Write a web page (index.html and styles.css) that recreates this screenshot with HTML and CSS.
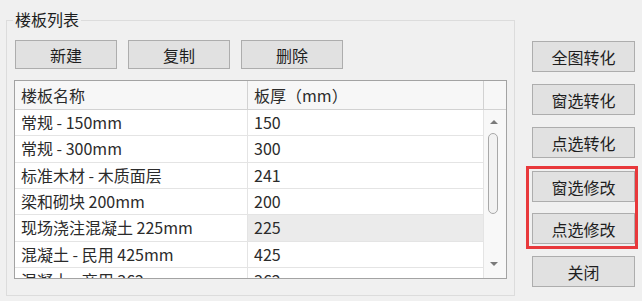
FILE: index.html
```html
<!DOCTYPE html>
<html lang="zh-CN">
<head>
    <meta charset="UTF-8">
    <title>楼板列表</title>
    <link rel="stylesheet" href="styles.css">
</head>
<body>
<div class="window">
    <div class="group">
        <span class="group-title">楼板列表</span>
        <div class="toolbar">
            <button class="btn">新建</button>
            <button class="btn">复制</button>
            <button class="btn">删除</button>
        </div>
        <div class="grid">
            <div class="grid-head">
                <div class="cell">楼板名称</div>
                <div class="cell">板厚（mm）</div>
                <div class="cell"></div>
            </div>
            <div class="grid-body">
                <div class="rows">
                    <div class="row"><div class="cell">常规 - 150mm</div><div class="cell">150</div></div>
                    <div class="row"><div class="cell">常规 - 300mm</div><div class="cell">300</div></div>
                    <div class="row"><div class="cell">标准木材 - 木质面层</div><div class="cell">241</div></div>
                    <div class="row"><div class="cell">梁和砌块 200mm</div><div class="cell">200</div></div>
                    <div class="row"><div class="cell">现场浇注混凝土 225mm</div><div class="cell current">225</div></div>
                    <div class="row"><div class="cell">混凝土 - 民用 425mm</div><div class="cell">425</div></div>
                    <div class="row"><div class="cell">混凝土 - 商用 362mm</div><div class="cell">362</div></div>
                </div>
                <div class="vscroll">
                    <span class="arrow up"></span>
                    <span class="thumb"></span>
                    <span class="arrow down"></span>
                </div>
            </div>
        </div>
    </div>

    <div class="side">
        <button class="btn side-btn">全图转化</button>
        <button class="btn side-btn">窗选转化</button>
        <button class="btn side-btn">点选转化</button>
        <div class="mark">
            <button class="btn side-btn">窗选修改</button>
            <button class="btn side-btn">点选修改</button>
        </div>
        <button class="btn side-btn">关闭</button>
    </div>
</div>
</body>
</html>
```

FILE: styles.css
```css
* {
    box-sizing: border-box;
}

body {
    margin: 0;
    background: #f0f0f0;
    font-family: "Noto Sans CJK SC", "Noto Sans", sans-serif;
    font-size: 16px;
    color: #2b2b2b;
}

.window {
    display: flex;
    align-items: flex-start;
    padding-left: 6px;
    height: 301px;
}

/* group box */
.group {
    position: relative;
    margin-top: 20px;
    width: 509px;
    height: 276px;
    border: 1px solid #dcdcdc;
    padding: 19px 7px 0 7px;
}

.group-title {
    position: absolute;
    top: -12px;
    left: 6px;
    padding: 0 2px;
    line-height: 20px;
    background: #f0f0f0;
    color: #1e1e1e;
}

.toolbar {
    display: flex;
    gap: 11px;
    padding-left: 1px;
}

.btn {
    font-family: inherit;
    font-size: 16px;
    color: #1e1e1e;
    background: #e1e1e1;
    border: 1px solid #adadad;
    border-radius: 0;
    padding: 0;
    width: 102px;
    height: 29px;
    line-height: 20px;
}

/* list */
.grid {
    margin-top: 11px;
    width: 493px;
    height: 199px;
    border: 1px solid #a3a3a3;
    background: #fff;
    display: flex;
    flex-direction: column;
}

.grid-head {
    display: grid;
    grid-template-columns: 233px 236px 1fr;
    height: 29px;
    background: #f7f7f7;
    border-bottom: 1px solid #d2d2d2;
}

.grid-head .cell {
    border-right: 1px solid #d2d2d2;
    line-height: 28px;
}

.grid-head .cell:last-child {
    border-right: none;
}

.cell {
    padding-left: 6px;
    white-space: nowrap;
    overflow: hidden;
}

.grid-body {
    flex: 1;
    display: flex;
    min-height: 0;
}

.rows {
    width: 469px;
    overflow: hidden;
}

.row {
    display: grid;
    grid-template-columns: 233px 236px;
    height: 26.35px;
    border-bottom: 1px solid #e4e4e4;
}

.row .cell {
    border-right: 1px solid #e4e4e4;
    line-height: 25px;
}

.row .cell.current {
    background: #ebebeb;
}

/* scrollbar */
.vscroll {
    position: relative;
    flex: 1;
    background: #f8f8f8;
}

.arrow {
    position: absolute;
    left: 6px;
    width: 0;
    height: 0;
    border-left: 4px solid transparent;
    border-right: 4px solid transparent;
}

.arrow.up {
    top: 10px;
    border-bottom: 4px solid #7a7a7a;
}

.arrow.down {
    bottom: 12px;
    border-top: 4px solid #7a7a7a;
}

.thumb {
    position: absolute;
    top: 23px;
    left: 4px;
    width: 10px;
    height: 81px;
    border: 1px solid #a8a8a8;
    border-radius: 5px;
    background: #f2f2f2;
}

/* right buttons */
.side {
    display: flex;
    flex-direction: column;
    margin-left: 17px;
    padding-top: 41px;
}

.side-btn {
    width: 103px;
    height: 31px;
    margin-bottom: 12px;
}

.mark {
    display: flex;
    flex-direction: column;
    margin: -4px -3px 7px -6px;
    padding: 2px 0 2px 3px;
    border: 3px solid #e8383b;
}

.mark .side-btn {
    margin-bottom: 0;
}

.mark .side-btn + .side-btn {
    margin-top: 11px;
}
```
